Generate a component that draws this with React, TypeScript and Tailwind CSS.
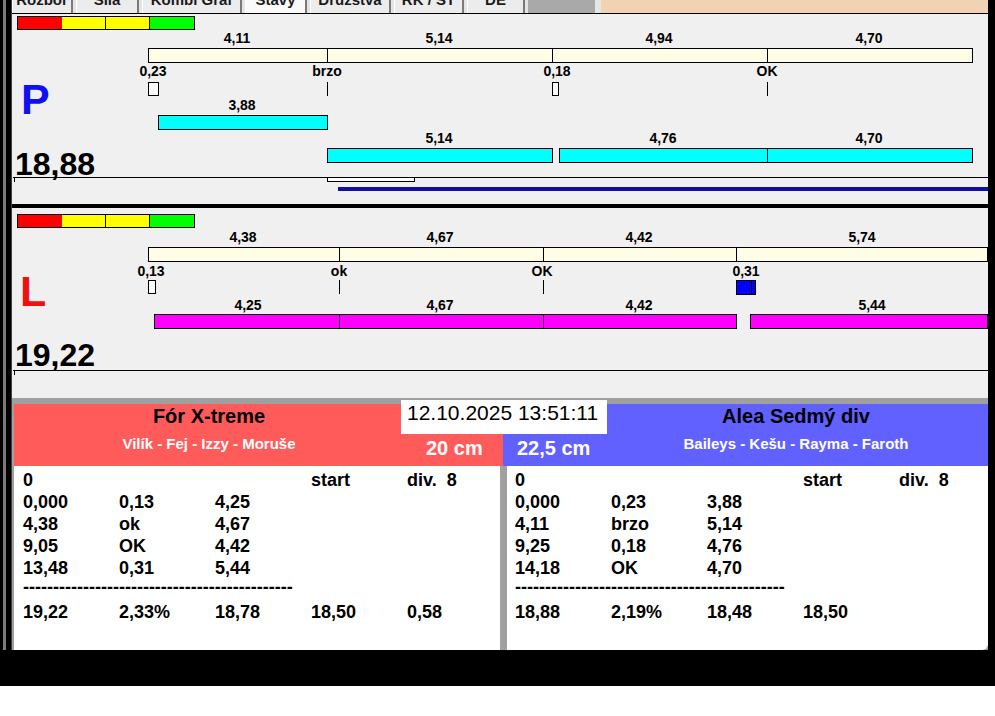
import React from 'react';

// page x of the content column
const OX = 12;

type Seg = [number, number];
type Mark = { x: number; w?: number; kind: 'box' | 'line' | 'fill' };

const Label = ({ cx, top, text }: { cx: number; top: number; text: string }) => (
  <div
    className="absolute -translate-x-1/2 whitespace-nowrap text-[14px] font-bold leading-[16px] text-black"
    style={{ left: cx - OX, top }}
  >
    {text}
  </div>
);

const BarRow = ({ segs, top, color }: { segs: Seg[]; top: number; color: string }) => (
  <>
    {segs.map(([a, b], i) => (
      <div
        key={i}
        className={`absolute h-[15px] border border-black ${color}`}
        style={{ left: a - OX, top, width: b - a + 1 }}
      />
    ))}
  </>
);

const Marks = ({ marks, top }: { marks: Mark[]; top: number }) => (
  <>
    {marks.map((m, i) =>
      m.kind === 'line' ? (
        <div key={i} className="absolute h-[14px] w-px bg-black" style={{ left: m.x - OX, top }} />
      ) : m.kind === 'box' ? (
        <div
          key={i}
          className="absolute h-[14px] border border-black bg-white"
          style={{ left: m.x - OX, top, width: m.w }}
        />
      ) : (
        <div
          key={i}
          className="absolute flex h-[15px] justify-end border border-black bg-[#0000ff]"
          style={{ left: m.x - OX, top, width: m.w }}
        >
          <div className="mr-[3px] h-full w-px bg-black" />
        </div>
      )
    )}
  </>
);

const Traffic = ({ top }: { top: number }) => (
  <div className="absolute left-[5px] flex h-[14px]" style={{ top }}>
    <div className="w-[46px] border border-black bg-[#ff0000]" />
    <div className="-ml-px w-[43px] border-y border-black bg-[#ffff00]" />
    <div className="w-[45px] border border-black bg-[#ffff00]" />
    <div className="-ml-px w-[46px] border border-black bg-[#00ff00]" />
  </div>
);

type PanelData = {
  letter: string;
  letterColor: string;
  letterTop: number;
  letterLeft: number;
  total: string;
  totalTop: number;
  trafficTop: number;
  topLabels: { cx: number; t: string }[];
  topLabelsY: number;
  cream: Seg[];
  creamY: number;
  midLabels: { cx: number; t: string }[];
  midLabelsY: number;
  marks: Mark[];
  marksY: number;
  rows: { labels: { cx: number; t: string }[]; labelsY: number; segs: Seg[]; y: number }[];
  barColor: string;
  lineY: number;
};

const panelP: PanelData = {
  letter: 'P',
  letterColor: 'text-[#1010f0]',
  letterTop: 64,
  letterLeft: 9,
  total: '18,88',
  totalTop: 132,
  trafficTop: 2,
  topLabels: [
    { cx: 237, t: '4,11' },
    { cx: 439, t: '5,14' },
    { cx: 659, t: '4,94' },
    { cx: 869, t: '4,70' },
  ],
  topLabelsY: 16,
  cream: [
    [148, 327],
    [327, 552],
    [552, 767],
    [767, 972],
  ],
  creamY: 34,
  midLabels: [
    { cx: 153, t: '0,23' },
    { cx: 327, t: 'brzo' },
    { cx: 557, t: '0,18' },
    { cx: 767, t: 'OK' },
  ],
  midLabelsY: 49,
  marks: [
    { x: 148, w: 11, kind: 'box' },
    { x: 327, kind: 'line' },
    { x: 552, w: 7, kind: 'box' },
    { x: 767, kind: 'line' },
  ],
  marksY: 68,
  rows: [
    { labels: [{ cx: 242, t: '3,88' }], labelsY: 83, segs: [[158, 327]], y: 101 },
    {
      labels: [
        { cx: 439, t: '5,14' },
        { cx: 663, t: '4,76' },
        { cx: 869, t: '4,70' },
      ],
      labelsY: 116,
      segs: [
        [327, 552],
        [559, 767],
        [767, 972],
      ],
      y: 134,
    },
  ],
  barColor: 'bg-[#00ffff]',
  lineY: 163,
};

const panelL: PanelData = {
  letter: 'L',
  letterColor: 'text-[#f01010]',
  letterTop: 62,
  letterLeft: 8,
  total: '19,22',
  totalTop: 129,
  trafficTop: 6,
  topLabels: [
    { cx: 243, t: '4,38' },
    { cx: 440, t: '4,67' },
    { cx: 639, t: '4,42' },
    { cx: 862, t: '5,74' },
  ],
  topLabelsY: 21,
  cream: [
    [148, 339],
    [339, 543],
    [543, 736],
    [736, 987],
  ],
  creamY: 39,
  midLabels: [
    { cx: 151, t: '0,13' },
    { cx: 339, t: 'ok' },
    { cx: 542, t: 'OK' },
    { cx: 746, t: '0,31' },
  ],
  midLabelsY: 55,
  marks: [
    { x: 148, w: 8, kind: 'box' },
    { x: 339, kind: 'line' },
    { x: 543, kind: 'line' },
    { x: 736, w: 20, kind: 'fill' },
  ],
  marksY: 72,
  rows: [
    {
      labels: [
        { cx: 248, t: '4,25' },
        { cx: 440, t: '4,67' },
        { cx: 639, t: '4,42' },
        { cx: 872, t: '5,44' },
      ],
      labelsY: 89,
      segs: [
        [154, 339],
        [339, 543],
        [543, 736],
        [750, 987],
      ],
      y: 106,
    },
  ],
  barColor: 'bg-[#ff00ff]',
  lineY: 162,
};

const Panel = ({ d, children }: { d: PanelData; children?: React.ReactNode }) => (
  <div className="relative h-[190px] overflow-hidden bg-[#f0f0f0]">
    <Traffic top={d.trafficTop} />
    {d.topLabels.map((l, i) => (
      <Label key={i} cx={l.cx} top={d.topLabelsY} text={l.t} />
    ))}
    <BarRow segs={d.cream} top={d.creamY} color="bg-[#fffde6]" />
    {d.midLabels.map((l, i) => (
      <Label key={i} cx={l.cx} top={d.midLabelsY} text={l.t} />
    ))}
    <Marks marks={d.marks} top={d.marksY} />
    {d.rows.map((r, i) => (
      <React.Fragment key={i}>
        {r.labels.map((l, j) => (
          <Label key={j} cx={l.cx} top={r.labelsY} text={l.t} />
        ))}
        <BarRow segs={r.segs} top={r.y} color={d.barColor} />
      </React.Fragment>
    ))}
    <div
      className={`absolute text-[43px] font-bold leading-[43px] ${d.letterColor}`}
      style={{ top: d.letterTop, left: d.letterLeft }}
    >
      {d.letter}
    </div>
    <div className="absolute left-[3px] text-[32px] font-bold leading-[36px] text-black" style={{ top: d.totalTop }}>
      {d.total}
    </div>
    <div className="absolute left-px right-0 h-px bg-black" style={{ top: d.lineY }} />
    <div className="absolute left-[2px] h-[5px] w-px bg-black" style={{ top: d.lineY }} />
    {children}
  </div>
);

const tabs = [
  { t: 'Rozbor', w: 'w-[61px]' },
  { t: 'Síla', w: 'w-[63px]' },
  { t: 'Kombi Graf', w: 'w-[100px]' },
  { t: 'Stavy', w: 'w-[62px]', sel: true },
  { t: 'Družstva', w: 'w-[81px]' },
  { t: 'RK / ST', w: 'w-[70px]' },
  { t: 'DE', w: 'w-[58px]' },
];

const Tabs = () => (
  <div className="flex h-[14px] overflow-hidden border-b border-black bg-[#e4e4e4]">
    {tabs.map((tab) => (
      <div
        key={tab.t}
        className={`mr-[3px] flex h-full shrink-0 justify-center overflow-hidden border-l border-r-2 border-l-white border-r-[#7a7a7a] ${tab.w} ${
          tab.sel ? 'bg-[#fafafa]' : 'bg-[#ececec]'
        }`}
      >
        <span className="-mt-[8px] whitespace-nowrap text-[15px] font-bold leading-[15px] text-[#1a1a1a]">{tab.t}</span>
      </div>
    ))}
    <div className="h-full w-[67px] shrink-0 bg-[#a9a9a9]" />
    <div className="h-full w-[6px] shrink-0 bg-[#e6e6e6]" />
    <div className="h-full flex-1 bg-[#f1d3b4]" />
  </div>
);

type Row = string[];

const leftRows: Row[] = [
  ['0', '', '', 'start', 'div.  8'],
  ['0,000', '0,13', '4,25'],
  ['4,38', 'ok', '4,67'],
  ['9,05', 'OK', '4,42'],
  ['13,48', '0,31', '5,44'],
];
const leftTotal: Row = ['19,22', '2,33%', '18,78', '18,50', '0,58'];

const rightRows: Row[] = [
  ['0', '', '', 'start', 'div.  8'],
  ['0,000', '0,23', '3,88'],
  ['4,11', 'brzo', '5,14'],
  ['9,25', '0,18', '4,76'],
  ['14,18', 'OK', '4,70'],
];
const rightTotal: Row = ['18,88', '2,19%', '18,48', '18,50'];

const ListRow = ({ r }: { r: Row }) => (
  <div className="grid h-[22px] grid-cols-[96px_96px_96px_96px_96px] leading-[22px]">
    {r.map((c, i) => (
      <span key={i} className="whitespace-pre">
        {c}
      </span>
    ))}
  </div>
);

const List = ({
  rows,
  total,
  className,
  pad,
  sb,
}: {
  rows: Row[];
  total: Row;
  className: string;
  pad: string;
  sb: string;
}) => (
  <div className={`flex h-full bg-white ${className}`}>
    <div className={`flex-1 pt-[3px] text-[18px] font-bold text-black ${pad}`}>
      {rows.map((r, i) => (
        <ListRow key={i} r={r} />
      ))}
      <div className="relative -top-[3px] h-[22px] leading-[22px]">{'-'.repeat(45)}</div>
      <ListRow r={total} />
    </div>
    <div className={`flex h-full justify-center bg-[#f0f0f0] pt-[7px] ${sb}`}>
      <div className="h-0 w-0 border-x-[4px] border-b-[5px] border-x-transparent border-b-[#a6a6a6]" />
    </div>
  </div>
);

const Bottom = () => (
  <div className="relative bg-[#a0a0a0] pl-[2px]">
    <div className="flex h-[62px]">
      <div className="flex w-[489px] bg-[#ff5b5b]">
        <div className="flex w-[390px] flex-col items-center">
          <div className="text-[20px] font-bold leading-[24px] text-black">Fór X-treme</div>
          <div className="mt-[6px] text-[15px] font-bold leading-[20px] text-white">Vilík - Fej - Izzy - Moruše</div>
        </div>
        <div className="pl-[22px] pt-[32px] text-[20px] font-bold leading-[24px] text-white">20 cm</div>
      </div>
      <div className="flex w-[485px] bg-[#6161ff]">
        <div className="w-[101px] pl-[14px] pt-[32px] text-[20px] font-bold leading-[24px] text-white">22,5 cm</div>
        <div className="flex w-[384px] flex-col items-center">
          <div className="text-[20px] font-bold leading-[24px] text-black">Alea Sedmý div</div>
          <div className="mt-[6px] text-[15px] font-bold leading-[20px] text-white">Baileys - Kešu - Rayma - Faroth</div>
        </div>
      </div>
    </div>
    <div className="flex h-[184px]">
      <List rows={leftRows} total={leftTotal} className="w-[486px]" pad="pl-[9px]" sb="w-[17px]" />
      <div className="w-[7px] bg-[#a0a0a0]" />
      <List rows={rightRows} total={rightTotal} className="w-[481px] rounded-br-[6px]" pad="pl-[8px]" sb="w-[15px]" />
    </div>
    <div className="absolute left-[389px] -top-[4px] h-[34px] w-[206px] bg-white pl-[6px] text-[21px] leading-[26px] text-black">
      12.10.2025 13:51:11
    </div>
  </div>
);

export default function App() {
  return (
    <div className="flex h-[716px] w-[995px] flex-col bg-white font-['Liberation_Sans',Arial,sans-serif]">
      <div className="flex h-[650px] bg-black">
        <div className="relative w-[12px] shrink-0 bg-black">
          <div className="absolute left-[3px] top-0 h-full w-[3px] bg-[#7a7a7a]" />
          <div className="absolute right-0 top-0 h-full w-px bg-[#404040]" />
        </div>
        <div className="flex w-[976px] shrink-0 flex-col">
          <Tabs />
          <Panel d={panelP}>
            <div className="absolute left-[315px] top-[163px] h-[5px] w-[88px] border border-black bg-white" />
            <div className="absolute left-[326px] right-0 top-[173px] h-[4px] bg-[#1010a0]" />
          </Panel>
          <div className="h-[4px] bg-black" />
          <Panel d={panelL} />
          <div className="h-[6px] bg-[#a0a0a0]" />
          <Bottom />
        </div>
        <div className="flex-1 bg-black" />
      </div>
      <div className="h-[36px] bg-black" />
    </div>
  );
}
